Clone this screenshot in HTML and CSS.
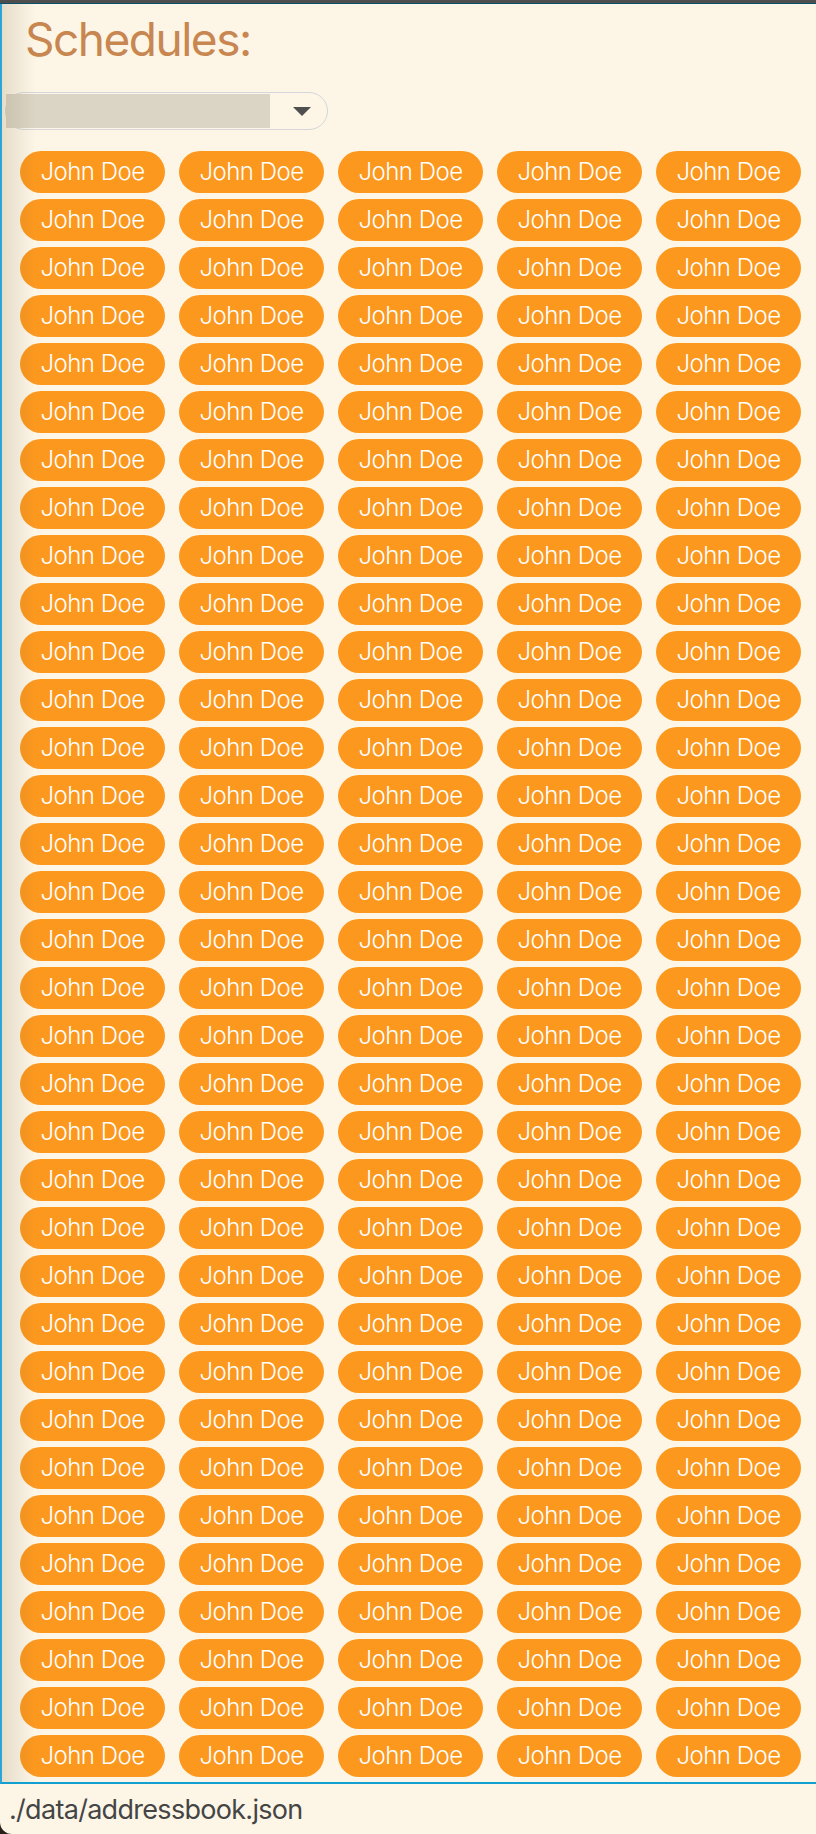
FILE: index.html
```html
<!DOCTYPE html>
<html>
<head>
<meta charset="utf-8">
<link rel="stylesheet" href="styles.css">
</head>
<body>
<div class="window">
  <div class="topbar"></div>
  <div class="panel">
    <h1 class="title">Schedules:</h1>
    <div class="select">
      <div class="select-fill"></div>
      <svg class="caret" width="18" height="10" viewBox="0 0 18 10"><path d="M0 0 H18 L9 9 Z" fill="#4f4f4f"/></svg>
    </div>
    <div class="grid">
      <span class="pill">John Doe</span><span class="pill">John Doe</span><span class="pill">John Doe</span><span class="pill">John Doe</span><span class="pill">John Doe</span>
      <span class="pill">John Doe</span><span class="pill">John Doe</span><span class="pill">John Doe</span><span class="pill">John Doe</span><span class="pill">John Doe</span>
      <span class="pill">John Doe</span><span class="pill">John Doe</span><span class="pill">John Doe</span><span class="pill">John Doe</span><span class="pill">John Doe</span>
      <span class="pill">John Doe</span><span class="pill">John Doe</span><span class="pill">John Doe</span><span class="pill">John Doe</span><span class="pill">John Doe</span>
      <span class="pill">John Doe</span><span class="pill">John Doe</span><span class="pill">John Doe</span><span class="pill">John Doe</span><span class="pill">John Doe</span>
      <span class="pill">John Doe</span><span class="pill">John Doe</span><span class="pill">John Doe</span><span class="pill">John Doe</span><span class="pill">John Doe</span>
      <span class="pill">John Doe</span><span class="pill">John Doe</span><span class="pill">John Doe</span><span class="pill">John Doe</span><span class="pill">John Doe</span>
      <span class="pill">John Doe</span><span class="pill">John Doe</span><span class="pill">John Doe</span><span class="pill">John Doe</span><span class="pill">John Doe</span>
      <span class="pill">John Doe</span><span class="pill">John Doe</span><span class="pill">John Doe</span><span class="pill">John Doe</span><span class="pill">John Doe</span>
      <span class="pill">John Doe</span><span class="pill">John Doe</span><span class="pill">John Doe</span><span class="pill">John Doe</span><span class="pill">John Doe</span>
      <span class="pill">John Doe</span><span class="pill">John Doe</span><span class="pill">John Doe</span><span class="pill">John Doe</span><span class="pill">John Doe</span>
      <span class="pill">John Doe</span><span class="pill">John Doe</span><span class="pill">John Doe</span><span class="pill">John Doe</span><span class="pill">John Doe</span>
      <span class="pill">John Doe</span><span class="pill">John Doe</span><span class="pill">John Doe</span><span class="pill">John Doe</span><span class="pill">John Doe</span>
      <span class="pill">John Doe</span><span class="pill">John Doe</span><span class="pill">John Doe</span><span class="pill">John Doe</span><span class="pill">John Doe</span>
      <span class="pill">John Doe</span><span class="pill">John Doe</span><span class="pill">John Doe</span><span class="pill">John Doe</span><span class="pill">John Doe</span>
      <span class="pill">John Doe</span><span class="pill">John Doe</span><span class="pill">John Doe</span><span class="pill">John Doe</span><span class="pill">John Doe</span>
      <span class="pill">John Doe</span><span class="pill">John Doe</span><span class="pill">John Doe</span><span class="pill">John Doe</span><span class="pill">John Doe</span>
      <span class="pill">John Doe</span><span class="pill">John Doe</span><span class="pill">John Doe</span><span class="pill">John Doe</span><span class="pill">John Doe</span>
      <span class="pill">John Doe</span><span class="pill">John Doe</span><span class="pill">John Doe</span><span class="pill">John Doe</span><span class="pill">John Doe</span>
      <span class="pill">John Doe</span><span class="pill">John Doe</span><span class="pill">John Doe</span><span class="pill">John Doe</span><span class="pill">John Doe</span>
      <span class="pill">John Doe</span><span class="pill">John Doe</span><span class="pill">John Doe</span><span class="pill">John Doe</span><span class="pill">John Doe</span>
      <span class="pill">John Doe</span><span class="pill">John Doe</span><span class="pill">John Doe</span><span class="pill">John Doe</span><span class="pill">John Doe</span>
      <span class="pill">John Doe</span><span class="pill">John Doe</span><span class="pill">John Doe</span><span class="pill">John Doe</span><span class="pill">John Doe</span>
      <span class="pill">John Doe</span><span class="pill">John Doe</span><span class="pill">John Doe</span><span class="pill">John Doe</span><span class="pill">John Doe</span>
      <span class="pill">John Doe</span><span class="pill">John Doe</span><span class="pill">John Doe</span><span class="pill">John Doe</span><span class="pill">John Doe</span>
      <span class="pill">John Doe</span><span class="pill">John Doe</span><span class="pill">John Doe</span><span class="pill">John Doe</span><span class="pill">John Doe</span>
      <span class="pill">John Doe</span><span class="pill">John Doe</span><span class="pill">John Doe</span><span class="pill">John Doe</span><span class="pill">John Doe</span>
      <span class="pill">John Doe</span><span class="pill">John Doe</span><span class="pill">John Doe</span><span class="pill">John Doe</span><span class="pill">John Doe</span>
      <span class="pill">John Doe</span><span class="pill">John Doe</span><span class="pill">John Doe</span><span class="pill">John Doe</span><span class="pill">John Doe</span>
      <span class="pill">John Doe</span><span class="pill">John Doe</span><span class="pill">John Doe</span><span class="pill">John Doe</span><span class="pill">John Doe</span>
      <span class="pill">John Doe</span><span class="pill">John Doe</span><span class="pill">John Doe</span><span class="pill">John Doe</span><span class="pill">John Doe</span>
      <span class="pill">John Doe</span><span class="pill">John Doe</span><span class="pill">John Doe</span><span class="pill">John Doe</span><span class="pill">John Doe</span>
      <span class="pill">John Doe</span><span class="pill">John Doe</span><span class="pill">John Doe</span><span class="pill">John Doe</span><span class="pill">John Doe</span>
      <span class="pill">John Doe</span><span class="pill">John Doe</span><span class="pill">John Doe</span><span class="pill">John Doe</span><span class="pill">John Doe</span>
    </div>
  </div>
  <div class="statusbar">./data/addressbook.json</div>
</div>
</body>
</html>
```

FILE: styles.css
```css
html, body {
  margin: 0;
  padding: 0;
}
body {
  background: #2b2019;
  font-family: Inter, "Noto Sans", sans-serif;
  width: 816px;
  height: 1834px;
  overflow: hidden;
}
.window {
  background: #fdf6e7;
  height: 1834px;
  border-bottom-left-radius: 12px;
  display: flex;
  flex-direction: column;
  overflow: hidden;
}
.topbar {
  height: 3px;
  background: #4e4e4e;
  border-bottom: 1px solid #0c4f6b;
}
.panel {
  position: relative;
  border-left: 2px solid #2aa6d9;
  border-bottom: 2px solid #139fd0;
  height: 1780px;
  box-sizing: border-box;
  background: #fdf6e7;
}
.panel::before {
  content: "";
  position: absolute;
  left: 0;
  top: 0;
  bottom: 0;
  width: 34px;
  background: linear-gradient(to right, rgba(110, 90, 50, 0.16), rgba(110, 90, 50, 0));
  pointer-events: none;
  z-index: 2;
}
.title {
  margin: 0;
  padding: 13px 0 0 23px;
  font-size: 46px;
  line-height: 44px;
  font-weight: 400;
  color: #c88650;
  letter-spacing: -1.5px;
}
.select {
  margin: 31px 0 0 3px;
  width: 323px;
  height: 38px;
  box-sizing: border-box;
  border: 1.5px solid #d4d6d9;
  border-radius: 19px;
  display: flex;
  align-items: center;
}
.select-fill {
  width: 264px;
  height: 34px;
  background: #dbd5c5;
}
.caret {
  margin-left: 23px;
  margin-top: 1px;
}
.grid {
  margin: 21px 0 0 18px;
  display: grid;
  grid-template-columns: repeat(5, 145px);
  column-gap: 14px;
  row-gap: 6px;
}
.pill {
  height: 42px;
  border-radius: 21px;
  background: #fc981e;
  color: #ffffff;
  font-size: 24px;
  line-height: 42px;
  text-align: center;
  font-weight: 300;
  letter-spacing: -0.5px;
}
.statusbar {
  flex: 1;
  padding: 4px 0 0 9px;
  font-size: 27px;
  line-height: 44px;
  color: #454545;
  letter-spacing: -0.7px;
}
```
